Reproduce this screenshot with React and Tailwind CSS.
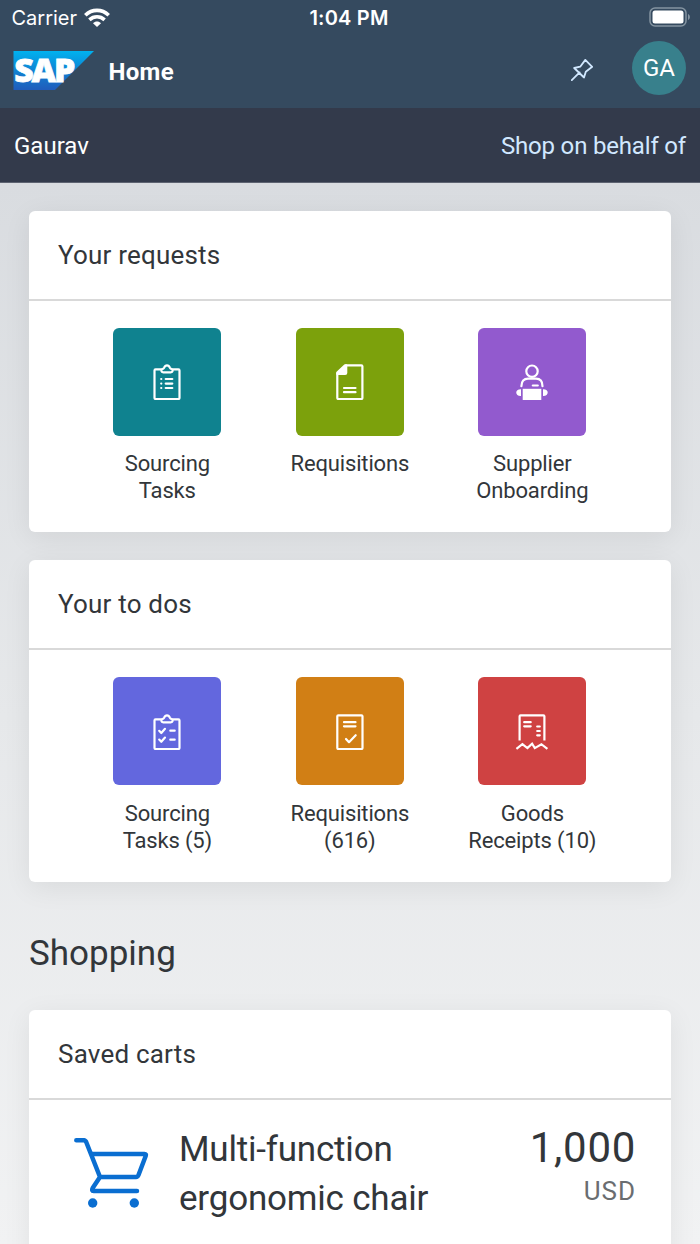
import React from 'react';

const svgBase = {
  fill: 'none',
  stroke: 'currentColor',
  strokeWidth: 2.2,
  strokeLinecap: 'round',
  strokeLinejoin: 'round',
};

const TileSvg = ({ children }) => (
  <svg viewBox="0 0 36 36" className="w-9 h-9 text-white" {...svgBase}>
    {children}
  </svg>
);

const Clipboard = () => (
  <>
    <path d="M12 5.4H6.5a1 1 0 0 0-1 1V34a1 1 0 0 0 1 1h23a1 1 0 0 0 1-1V6.4a1 1 0 0 0-1-1H24" />
    <path d="M14.2 8.4h7.6c2 0 2.6-2.4.8-3.3-.8-.4-1.3-.6-1.7-1.4C20.200 2 19.200 1.300 18 1.300S15.800 2 15.100 3.700c-.4.8-.9 1-1.700 1.400-1.800.9-1.200 3.300.8 3.300Z" />
  </>
);

const SourcingIcon = () => (
  <TileSvg>
    <Clipboard />
    <path d="M12.200 15h.1M12.200 19.600h.1M12.200 24h.1M16.700 15h6.600M16.700 19.600h6.600M16.700 24h6.600" />
  </TileSvg>
);

const DocumentIcon = () => (
  <TileSvg>
    <path d="M5.300 9.500V34a1 1 0 0 0 1 1H29.400a1 1 0 0 0 1-1V2.300a1 1 0 0 0-1-1H14" />
    <path d="M5.300 8.500 13 1.300h1.200V9a1 1 0 0 1-1 1H5.300Z" fill="currentColor" />
    <path d="M12 24h11.500M12 28.200h11.500" />
  </TileSvg>
);

const SupplierIcon = () => (
  <TileSvg>
    <circle cx="18" cy="7.200" r="5.700" />
    <path d="M7.400 22.200C7.400 17.200 10 14.700 14 14.700h8c4 0 6.500 2.500 6.500 7.500" />
    <path d="M18.800 21.500h5" />
    <path d="M8.700 24.800h18.600V36H8.700Z" fill="currentColor" stroke="none" />
    <path d="M7 25.200v6.700c-6.300.2-6.300-6.900 0-6.700ZM29 25.200v6.700c6.300.2 6.300-6.900 0-6.700Z" fill="currentColor" stroke="none" />
  </TileSvg>
);

const SourcingCheckIcon = () => (
  <TileSvg>
    <Clipboard />
    <path d="M10.200 16.800 12.300 19l3.700-4.200M10.200 25.600l2.100 2.200 3.700-4.200M21.300 16.700h4.400M21.300 25.700h4.400" />
  </TileSvg>
);

const ApprovalIcon = () => (
  <TileSvg>
    <rect x="5.300" y="1.300" width="25.200" height="33.700" rx="1" />
    <path d="M12 8.200h11.500M12 12.300h11.500M14 25l3 3.200 6.700-7" />
  </TileSvg>
);

const ReceiptIcon = () => (
  <TileSvg>
    <path d="M5.600 26.400V2.300a1 1 0 0 1 1-1h22.800a1 1 0 0 1 1 1v24.100" strokeLinecap="butt" />
    <path d="m2.400 34.800 6-4.600 5 3.900 4.700-4.400 2.700 4.400 6.600-3.900 6 4.600" strokeLinecap="butt" strokeLinejoin="miter" />
    <path d="M10.200 8.200h6.500M10.200 12.300h6.500M23.200 12.500h2.600M23.200 17h2.600M23.200 21.300h2.600" />
  </TileSvg>
);

const requests = [
  { lines: ['Sourcing', 'Tasks'], color: 'bg-[#0f828f]', icon: <SourcingIcon /> },
  { lines: ['Requisitions'], color: 'bg-[#7ca10c]', icon: <DocumentIcon /> },
  { lines: ['Supplier', 'Onboarding'], color: 'bg-[#925ace]', icon: <SupplierIcon /> },
];

const todos = [
  { lines: ['Sourcing', 'Tasks (5)'], color: 'bg-[#6367de]', icon: <SourcingCheckIcon /> },
  { lines: ['Requisitions', '(616)'], color: 'bg-[#d17f15]', icon: <ApprovalIcon /> },
  { lines: ['Goods', 'Receipts (10)'], color: 'bg-[#cf4242]', icon: <ReceiptIcon /> },
];

const StatusBar = () => (
  <div className="grid grid-cols-[296px_1fr_296px] items-center h-9 font-['Inter',sans-serif] text-[20px] leading-6">
    <div className="flex items-center gap-[7px] pl-[11.5px]">
      <span>Carrier</span>
      <svg viewBox="0 0 26 19" className="w-[26px] h-[19px] mb-0.5" fill="none" stroke="currentColor" strokeWidth="3.600">
        <path d="M1.300 7.300C8 .7 18 .7 24.700 7.300" />
        <path d="M5.400 11.800c4.400-4 10.800-4 15.200 0" />
        <path d="M9 15.300c2.300-2.300 5.700-2.300 8 0L13 19Z" fill="currentColor" stroke="none" />
      </svg>
    </div>
    <div className="pr-0.5 text-center font-semibold tracking-[0.2px] whitespace-nowrap">1:04 PM</div>
    <svg viewBox="0 0 42 20" className="w-[42px] h-5 justify-self-end mr-[9px] mb-0.5" fill="none">
      <rect x="1" y="1" width="36" height="18" rx="5" stroke="#8494a1" strokeWidth="1.500" />
      <rect x="3.500" y="3.500" width="31" height="13" rx="2.500" fill="#fff" />
      <path d="M39 7c2.500.7 2.500 5.300 0 6Z" fill="#8494a1" />
    </svg>
  </div>
);

const SapLogo = () => (
  <svg viewBox="0 0 81 39" className="w-[81px] h-[39px] -ml-px overflow-visible">
    <defs>
      <linearGradient id="sap" x1="0" y1="0" x2="0" y2="1">
        <stop offset="0" stopColor="#00b2ef" />
        <stop offset="0.500" stopColor="#1083d3" />
        <stop offset="1" stopColor="#205cbb" />
      </linearGradient>
    </defs>
    <path d="M.5 0H81L42 39H.5Z" fill="url(#sap)" />
    <text
      x="1.200"
      y="31"
      textLength="59"
      lengthAdjust="spacingAndGlyphs"
      className="font-['Open_Sans',sans-serif] font-extrabold text-[32.500px] tracking-[-2px]"
      fill="#fff"
      stroke="#fff"
      strokeWidth="0.800"
    >
      SAP
    </text>
  </svg>
);

const Header = () => (
  <header className="bg-[#354a5f] text-white h-[108px]">
    <StatusBar />
    <div className="flex items-center pl-[14px] pr-[14px] h-[68px]">
      <SapLogo />
      <h1 className="ml-[14.5px] mt-[3px] text-[24px] leading-8 font-bold tracking-[0.3px]">Home</h1>
      <svg viewBox="0 0 22 22" className="ml-auto w-[22px] h-[22px] text-[#d1e8ff]" {...svgBase} strokeWidth="1.800">
        <path d="M.8 21.200 8.600 13.400M14.300.900 21.200 7.800 14.800 12.700 13 18.500 3.200 9l6-1.300Z" />
      </svg>
      <div className="ml-[39px] mb-1 flex items-center justify-center w-[54px] h-[54px] rounded-full bg-[#38808c] text-[24px] leading-8">
        GA
      </div>
    </div>
  </header>
);

const Card = ({ title, className = '', children }) => (
  <section className={`bg-white rounded-md shadow-[0_6px_28px_rgba(0,0,0,0.07)] ${className}`}>
    <h2 className="h-[90px] pl-[29px] pt-[28px] border-b-2 border-[#d9d9d9] text-[26px] leading-8 tracking-[0.2px]">
      {title}
    </h2>
    {children}
  </section>
);

const TileGrid = ({ tiles, iconClass = '', labelClass = 'mt-[14px]' }) => (
  <div className="grid grid-cols-[182.5px_182.5px_182.5px] justify-center pt-[27px] pr-[0.3px]">
    {tiles.map((tile) => (
      <div key={tile.lines.join(' ')} className="flex flex-col items-center">
        <div className={`w-[108px] h-[108px] rounded-md flex items-center justify-center ${tile.color}`}>
          <div className={iconClass}>{tile.icon}</div>
        </div>
        <div className={`text-center text-[22px] leading-[27px] tracking-[-0.15px] ${labelClass}`}>
          {tile.lines.map((line) => (
            <div key={line} className="whitespace-nowrap">{line}</div>
          ))}
        </div>
      </div>
    ))}
  </div>
);

const CartIcon = () => (
  <svg viewBox="0 0 75 70" className="w-[75px] h-[70px] text-[#0a6ed1]" {...svgBase} strokeWidth="4.500">
    <path d="M2.300 2.300H10.500L12 3.500 26 39M18.500 16H70.500q2 0 1.200 2L64.500 37q-.8 2-2.500 2H26L18.700 50q-1.500 3 1 3H63" />
    <circle cx="18.700" cy="65" r="4.700" fill="currentColor" stroke="none" />
    <circle cx="60.300" cy="65" r="4.700" fill="currentColor" stroke="none" />
  </svg>
);

const App = () => (
  <div className="w-[700px] h-[1244px] overflow-hidden flex flex-col font-['Roboto',sans-serif] text-[#32363a]">
    <Header />
    <div className="h-[75px] shrink-0 bg-[#333a4b] border-b border-[#5d6371] flex items-center justify-between px-[14px] pt-px text-[24px] leading-8">
      <span className="text-white">Gaurav</span>
      <span className="text-[#d1e8ff] tracking-[-0.18px]">Shop on behalf of</span>
    </div>
    <main className="flex-1 min-h-0 px-[29px] pt-7 bg-linear-to-b from-[#d9dce0] via-[#e6e8ea] to-[#f1f2f3]">
      <Card title="Your requests" className="h-[321px]">
        <TileGrid tiles={requests} />
      </Card>
      <Card title="Your to dos" className="mt-[28px] h-[322px]">
        <TileGrid tiles={todos} iconClass="translate-y-px" labelClass="mt-[15px]" />
      </Card>
      <h2 className="mt-[48px] h-[80px] text-[35px] leading-[48px]">Shopping</h2>
      <Card title="Saved carts" className="h-[400px]">
        <div className="flex pl-[45px] pr-[35px] pt-[25px]">
          <div className="pt-[13px]">
            <CartIcon />
          </div>
          <div className="ml-[30px] text-[35px] leading-[49px] tracking-[-0.2px]">
            Multi-function
            <br />
            ergonomic chair
          </div>
          <div className="ml-auto text-right">
            <div className="text-[42px] leading-[45px] tracking-[0.7px]">1,000</div>
            <div className="text-[26px] leading-[42px] tracking-[1px] text-[#6a6d70]">USD</div>
          </div>
        </div>
      </Card>
    </main>
  </div>
);

export default App;
